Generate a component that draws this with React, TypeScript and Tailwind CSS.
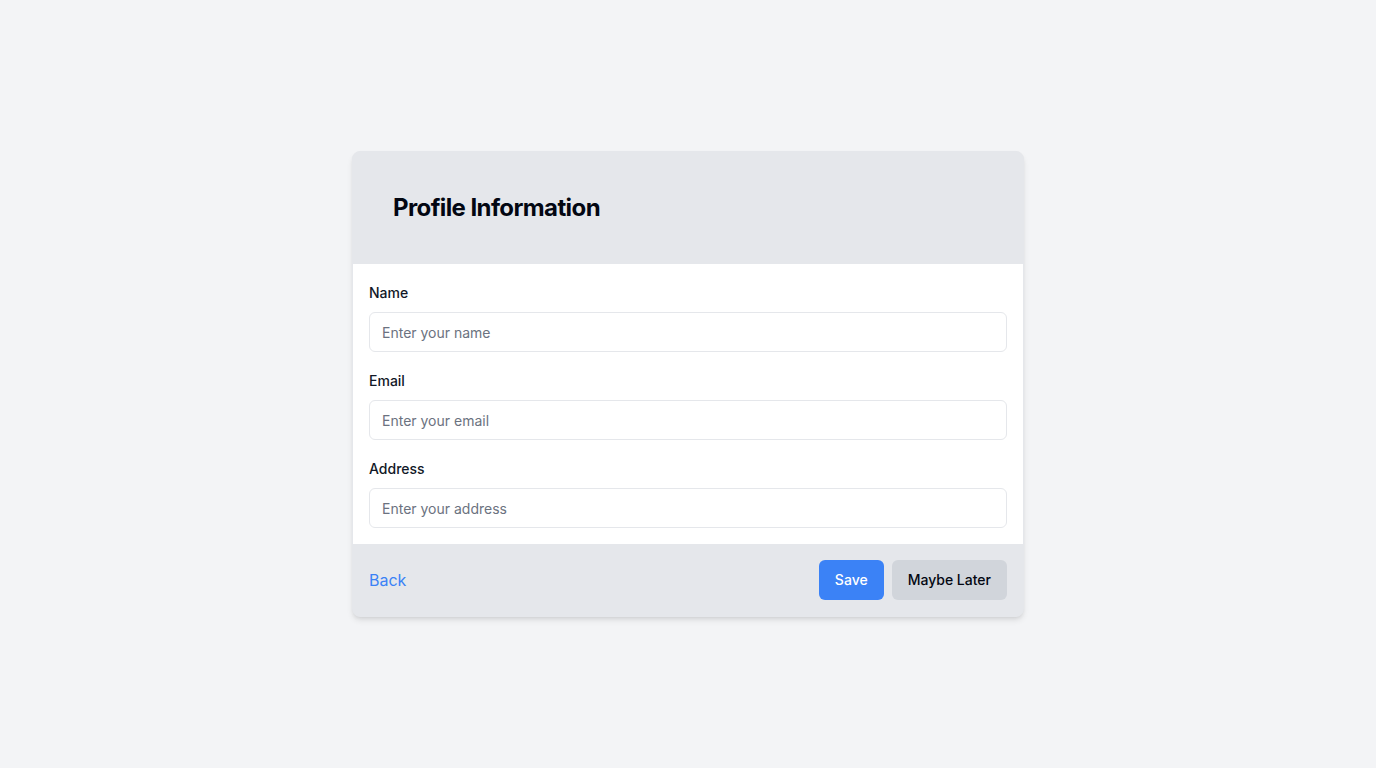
export default function App() {
  return (
    <div
      className="min-h-screen bg-[#f3f4f6] flex items-center justify-center"
      style={{ fontFamily: "Inter, 'Noto Sans', sans-serif" }}
    >
      <div className="w-[672px] rounded-lg border border-[#e5e7eb] bg-[#e5e7eb] shadow-md overflow-hidden">
        {/* Header */}
        <div className="p-10">
          <h2 className="text-2xl font-bold tracking-tight text-[#030712]">Profile Information</h2>
        </div>

        {/* Body */}
        <div className="bg-white p-4 flex flex-col gap-4">
          {[
            { label: "Name", placeholder: "Enter your name" },
            { label: "Email", placeholder: "Enter your email" },
            { label: "Address", placeholder: "Enter your address" },
          ].map((f) => (
            <div key={f.label}>
              <label className="block pt-px text-sm leading-[23px] font-medium text-[#111827] mb-2">
                {f.label}
              </label>
              <input
                type="text"
                placeholder={f.placeholder}
                className="w-full h-10 px-3 text-sm rounded-md border border-[#e5e7eb] text-[#111827] placeholder:text-[#6b7280] outline-none"
              />
            </div>
          ))}
        </div>

        {/* Footer */}
        <div className="p-4 flex items-center justify-between">
          <a href="#" className="text-base text-[#3b82f6]">
            Back
          </a>
          <div className="flex gap-2">
            <button className="h-10 px-4 rounded-md bg-[#3b82f6] text-white text-sm font-medium">
              Save
            </button>
            <button className="h-10 px-4 rounded-md bg-[#d1d5db] text-[#030712] text-sm font-medium">
              Maybe Later
            </button>
          </div>
        </div>
      </div>
    </div>
  );
}
